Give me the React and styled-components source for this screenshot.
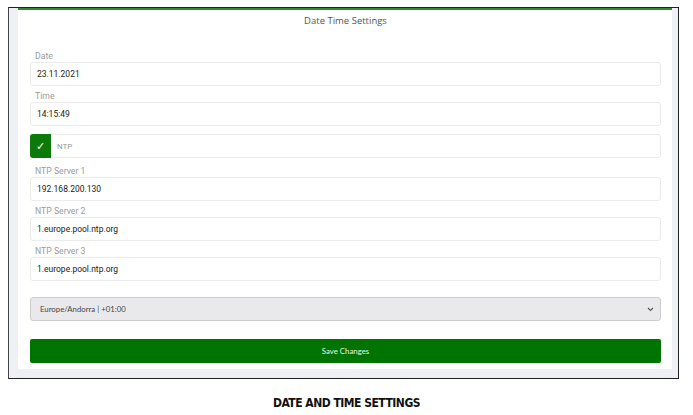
import React from "react";
import styled, { createGlobalStyle } from "styled-components";

const Global = createGlobalStyle`
  html, body { margin: 0; padding: 0; background: #fff; }
  body { width: 693px; height: 415px; overflow: hidden; font-family: Roboto, "Liberation Sans", sans-serif; }
  * { box-sizing: border-box; }
`;

const Page = styled.div`
  display: flex;
  flex-direction: column;
  align-items: flex-start;
  padding: 7px 0 0 8px;
`;

const Frame = styled.div`
  width: 671px;
  height: 372px;
  border: 1px solid #222;
  border-left-color: #444;
  background: #eef0f3;
  padding: 0 6px 9px 9px;
  display: flex;
`;

const Card = styled.div`
  flex: 1;
  background: #fff;
  border-top: 2px solid #2f8a34;
  padding: 0 11px 6px 12px;
  display: flex;
  flex-direction: column;
`;

const Title = styled.div`
  height: 22px;
  line-height: 22px;
  text-align: center;
  font-family: "Open Sans", sans-serif;
  font-size: 9.5px;
  color: #555;
  margin-bottom: 18px;
`;

const Field = styled.div`
  display: flex;
  flex-direction: column;
  margin-bottom: ${(p) => p.$mb ?? 4}px;
`;

const Label = styled.div`
  height: 12px;
  line-height: 12px;
  font-size: 8.7px;
  color: #9b9b9b;
  padding-left: 5px;
`;

const Input = styled.div`
  height: 24px;
  border: 1px solid #ececec;
  border-radius: 3px;
  padding-left: 6px;
  display: flex;
  align-items: center;
  font-size: 8.5px;
  color: #222;
`;

const CheckRow = styled.div`
  height: 24px;
  border: 1px solid #ececec;
  border-radius: 3px;
  display: flex;
  align-items: center;
  margin-top: 8px;
  margin-bottom: 7px;
`;

const CheckBox = styled.div`
  width: 21px;
  height: 24px;
  margin: -1px 0 -1px -1px;
  background: #0b7a0b;
  border-radius: 3px 0 0 3px;
  color: #fff;
  display: flex;
  align-items: center;
  justify-content: center;
  font-size: 11px;
  font-family: "DejaVu Sans", sans-serif;
`;

const CheckText = styled.span`
  margin-left: 6px;
  font-size: 8px;
  color: #9b9b9b;
`;

const Select = styled.div`
  height: 24px;
  margin-top: 16px;
  background: #e9e9ec;
  border: 1px solid #cdcdcd;
  border-radius: 3px;
  padding: 0 6px 0 9px;
  display: flex;
  align-items: center;
  justify-content: space-between;
  font-family: Lato, sans-serif;
  font-size: 7.8px;
  color: #444;
`;

const Button = styled.div`
  height: 24px;
  margin-top: 18px;
  background: #007400;
  border-radius: 2px;
  color: #e8f3e8;
  display: flex;
  align-items: center;
  justify-content: center;
  font-family: Lato, sans-serif;
  font-size: 7.8px;
`;

const Caption = styled.div`
  width: 693px;
  margin-left: -8px;
  margin-top: 17px;
  text-align: center;
  font-family: "DejaVu Sans Condensed", "DejaVu Sans", sans-serif;
  font-stretch: condensed;
  font-weight: bold;
  font-size: 12px;
  letter-spacing: -0.5px;
  color: #111;
`;

const Chevron = () => (
  <svg width="7" height="5" viewBox="0 0 7 5">
    <path d="M1 1 L3.5 3.5 L6 1" fill="none" stroke="#555" strokeWidth="1.1" />
  </svg>
);

const fields = [
  ["Date", "23.11.2021"],
  ["Time", "14:15:49"],
];

const servers = [
  ["NTP Server 1", "192.168.200.130"],
  ["NTP Server 2", "1.europe.pool.ntp.org"],
  ["NTP Server 3", "1.europe.pool.ntp.org"],
];

export default function App() {
  return (
    <>
      <Global />
      <Page>
        <Frame>
          <Card>
            <Title>Date Time Settings</Title>
            {fields.map(([l, v], i) => (
              <Field key={l} $mb={i === fields.length - 1 ? 0 : 4}>
                <Label>{l}</Label>
                <Input>{v}</Input>
              </Field>
            ))}
            <CheckRow>
              <CheckBox>✓</CheckBox>
              <CheckText>NTP</CheckText>
            </CheckRow>
            {servers.map(([l, v], i) => (
              <Field key={l} $mb={i === servers.length - 1 ? 0 : 4}>
                <Label>{l}</Label>
                <Input>{v}</Input>
              </Field>
            ))}
            <Select>
              <span>Europe/Andorra | +01:00</span>
              <Chevron />
            </Select>
            <Button>Save Changes</Button>
          </Card>
        </Frame>
        <Caption>DATE AND TIME SETTINGS</Caption>
      </Page>
    </>
  );
}
